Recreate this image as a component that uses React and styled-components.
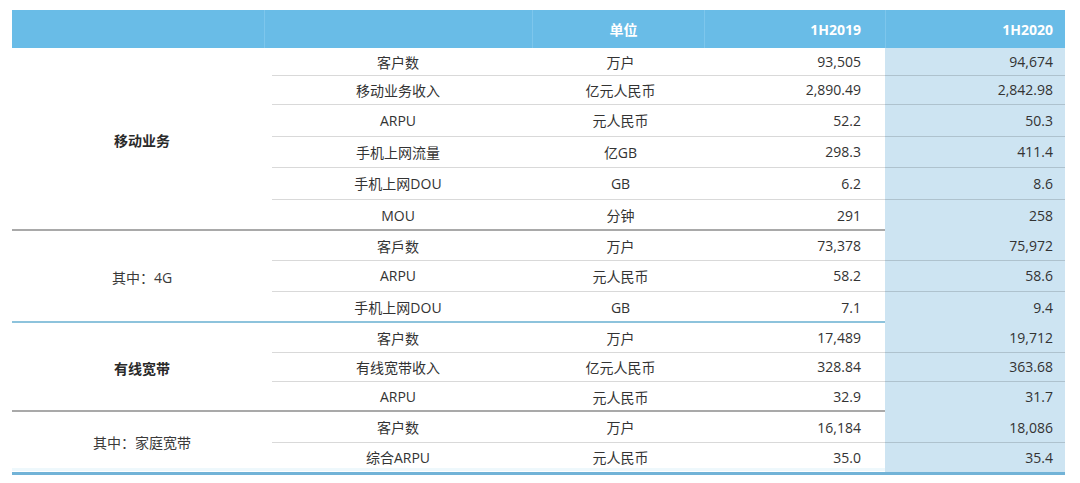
import React from "react";
import styled, { createGlobalStyle } from "styled-components";

const groups = [
  {
    label: "移动业务",
    bold: true,
    rows: [
      { name: "客户数", unit: "万户", a: "93,505", b: "94,674", h: 27 },
      { name: "移动业务收入", unit: "亿元人民币", a: "2,890.49", b: "2,842.98", h: 29 },
      { name: "ARPU", unit: "元人民币", a: "52.2", b: "50.3", h: 32 },
      { name: "手机上网流量", unit: "亿GB", a: "298.3", b: "411.4", h: 31 },
      { name: "手机上网DOU", unit: "GB", a: "6.2", b: "8.6", h: 32 },
      { name: "MOU", unit: "分钟", a: "291", b: "258", h: 32 },
    ],
  },
  {
    label: "其中：4G",
    line: "gray",
    rows: [
      { name: "客戶数", unit: "万户", a: "73,378", b: "75,972", h: 29 },
      { name: "ARPU", unit: "元人民币", a: "58.2", b: "58.6", h: 31 },
      { name: "手机上网DOU", unit: "GB", a: "7.1", b: "9.4", h: 32 },
    ],
  },
  {
    label: "有线宽带",
    bold: true,
    line: "blue",
    rows: [
      { name: "客户数", unit: "万户", a: "17,489", b: "19,712", h: 29 },
      { name: "有线宽带收入", unit: "亿元人民币", a: "328.84", b: "363.68", h: 29 },
      { name: "ARPU", unit: "元人民币", a: "32.9", b: "31.7", h: 31 },
    ],
  },
  {
    label: "其中：家庭宽带",
    line: "gray",
    rows: [
      { name: "客户数", unit: "万户", a: "16,184", b: "18,086", h: 30 },
      { name: "综合ARPU", unit: "元人民币", a: "35.0", b: "35.4", h: 30 },
    ],
  },
];

function App() {
  return (
    <Page>
      <GlobalStyle />
      <Table>
        <HeaderRow>
          <HeadCell />
          <HeadCell />
          <HeadCell $align="center">单位</HeadCell>
          <HeadCell $align="right" $pad={24}>
            1H2019
          </HeadCell>
          <HeadCell $align="right" $pad={12}>
            1H2020
          </HeadCell>
        </HeaderRow>
        {groups.map((g) => (
          <Group key={g.label} $line={g.line}>
            <Label $bold={g.bold}>{g.label}</Label>
            <div>
              {g.rows.map((r, i) => (
                <Row key={r.name} $h={r.h} $first={i === 0}>
                  <Cell $align="center">{r.name}</Cell>
                  <Cell $align="center" $shift={5}>
                    {r.unit}
                  </Cell>
                  <Cell $align="right" $pad={24}>
                    {r.a}
                  </Cell>
                  <Cell $align="right" $pad={12} $shade>
                    {r.b}
                  </Cell>
                </Row>
              ))}
            </div>
          </Group>
        ))}
        <BottomLine />
      </Table>
    </Page>
  );
}

const GlobalStyle = createGlobalStyle`
  body {
    margin: 0;
    background: #ffffff;
    font-family: "Open Sans", "Noto Sans CJK SC", sans-serif;
  }
`;

const Page = styled.div`
  width: 1080px;
  height: 483px;
  box-sizing: border-box;
  padding: 10px 0 0 12px;
  background: #ffffff;
`;

const Table = styled.div`
  width: 1053px;
  font-size: 14px;
  color: #333333;
`;

const HeaderRow = styled.div`
  display: grid;
  grid-template-columns: 252px 268px 172px 181px 180px;
  height: 38px;
  background-color: #69bce7;
  color: #ffffff;
  font-weight: bold;
`;

const HeadCell = styled.div`
  display: flex;
  align-items: center;
  justify-content: ${(p) =>
    p.$align === "right" ? "flex-end" : p.$align === "center" ? "center" : "flex-start"};
  padding-right: ${(p) => p.$pad || 0}px;
  padding-left: ${(p) => (p.$align === "center" ? 10 : 0)}px;
  border-left: 1px solid #7dc6ec;
  &:first-child {
    border-left: 0;
  }
`;

const Group = styled.div`
  display: grid;
  grid-template-columns: 252px 801px;
  border-top: ${(p) =>
    p.$line === "gray"
      ? "2px solid #a9a9a9"
      : p.$line === "blue"
      ? "2px solid #8dc3dc"
      : "0"};
  margin-top: ${(p) => (p.$line ? -2 : 0)}px;
`;

const Label = styled.div`
  display: flex;
  align-items: center;
  justify-content: center;
  padding-left: 8px;
  font-weight: ${(p) => (p.$bold ? "bold" : "normal")};
  color: ${(p) => (p.$bold ? "#2a2a2a" : "#3a3a3a")};
`;

const Row = styled.div`
  display: grid;
  grid-template-columns: 268px 172px 181px 180px;
  height: ${(p) => p.$h}px;
  position: relative;
  &::before {
    content: "";
    display: ${(p) => (p.$first ? "none" : "block")};
    position: absolute;
    top: 0;
    left: 8px;
    right: 0;
    height: 1px;
    background-color: rgba(0, 0, 0, 0.15);
  }
`;

const Cell = styled.div`
  display: flex;
  align-items: center;
  justify-content: ${(p) => (p.$align === "right" ? "flex-end" : "center")};
  padding-right: ${(p) => p.$pad || 0}px;
  padding-left: ${(p) => p.$shift || 0}px;
  background-color: ${(p) => (p.$shade ? "#cde4f2" : "transparent")};
  white-space: nowrap;
`;

const BottomLine = styled.div`
  height: 3px;
  background-color: #72b3d7;
  box-shadow: 0 -4px 0 #eef8fc;
`;

export default App;
